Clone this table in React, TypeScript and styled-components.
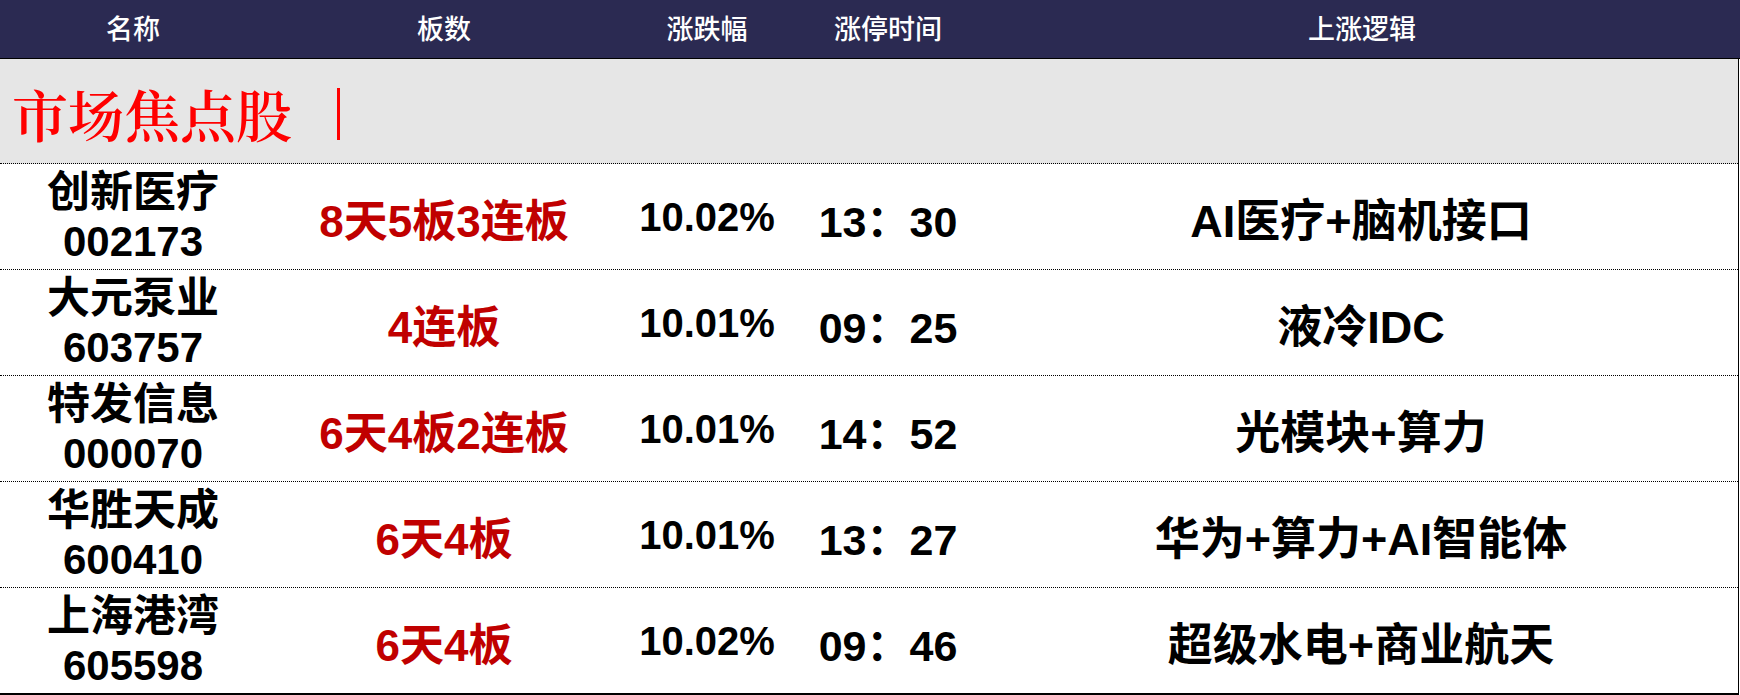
import styled, { createGlobalStyle } from 'styled-components';

const GlobalStyle = createGlobalStyle`
  html, body {
    margin: 0;
    padding: 0;
    background: #fff;
  }
  body {
    font-family: 'Liberation Sans', 'Noto Sans CJK SC', sans-serif;
  }
`;

const COLS = '266px 356px 170px 192px 1fr';

const stocks = [
  { name: '创新医疗', code: '002173', boards: '8天5板3连板', change: '10.02%', time: '13：30', logic: 'AI医疗+脑机接口' },
  { name: '大元泵业', code: '603757', boards: '4连板', change: '10.01%', time: '09：25', logic: '液冷IDC' },
  { name: '特发信息', code: '000070', boards: '6天4板2连板', change: '10.01%', time: '14：52', logic: '光模块+算力' },
  { name: '华胜天成', code: '600410', boards: '6天4板', change: '10.01%', time: '13：27', logic: '华为+算力+AI智能体' },
  { name: '上海港湾', code: '605598', boards: '6天4板', change: '10.02%', time: '09：46', logic: '超级水电+商业航天' },
];

const App = () => {
  return (
    <Wrapper>
      <GlobalStyle />
      <HeaderRow>
        <HeadCell>名称</HeadCell>
        <HeadCell>板数</HeadCell>
        <HeadCell>涨跌幅</HeadCell>
        <HeadCell>涨停时间</HeadCell>
        <HeadCell>上涨逻辑</HeadCell>
      </HeaderRow>

      <Body>
        <Band>
          <BandTitle>市场焦点股</BandTitle>
          <Caret />
        </Band>

        {stocks.map((s, i) => (
          <Row key={s.code} $last={i === stocks.length - 1}>
            <NameCell>
              <span>{s.name}</span>
              <span>{s.code}</span>
            </NameCell>
            <Cell $red $size={44}>{s.boards}</Cell>
            <Cell $size={40}>{s.change}</Cell>
            <Cell $size={43}>{s.time}</Cell>
            <Cell $size={45}>{s.logic}</Cell>
          </Row>
        ))}
      </Body>
    </Wrapper>
  );
};

const Wrapper = styled.div`
  width: 1740px;
  height: 695px;
  overflow: hidden;
  display: flex;
  flex-direction: column;
`;

const HeaderRow = styled.div`
  display: grid;
  grid-template-columns: ${COLS};
  height: 58px;
  background-color: #2b2a52;
  border-bottom: 1px solid #000;
`;

const HeadCell = styled.div`
  display: flex;
  align-items: center;
  justify-content: center;
  color: #fff;
  font-family: 'Noto Sans CJK SC', sans-serif;
  font-size: 27px;
  font-weight: 500;
  padding-bottom: 3px;
`;

const Body = styled.div`
  display: flex;
  flex-direction: column;
  border-right: 1px solid #000;
  margin-right: 1px;
`;

const Band = styled.div`
  display: flex;
  align-items: center;
  height: 104px;
  background-color: #e6e6e6;
  border-bottom: 1px dotted #000;
  padding-left: 12px;
`;

const BandTitle = styled.span`
  color: #ff0000;
  font-family: 'Noto Serif CJK SC', 'Noto Sans CJK SC', serif;
  font-size: 56px;
  font-weight: 600;
  line-height: 1;
  padding-top: 4px;
`;

const Caret = styled.span`
  display: block;
  width: 3px;
  height: 52px;
  margin-left: 45px;
  margin-top: 6px;
  background-color: #ff0000;
`;

const Row = styled.div<{ $last?: boolean }>`
  display: grid;
  grid-template-columns: ${COLS};
  height: 105px;
  background: #fff;
  border-bottom: ${p => (p.$last ? '2px solid #000' : '1px dotted #000')};
`;

const Cell = styled.div<{ $red?: boolean; $size: number }>`
  display: flex;
  align-items: center;
  justify-content: center;
  font-family: 'Liberation Sans', 'Noto Sans CJK SC', sans-serif;
  font-size: ${p => p.$size}px;
  font-weight: 700;
  color: ${p => (p.$red ? '#c00000' : '#000')};
  white-space: nowrap;
  padding-top: 2px;
`;

const NameCell = styled.div`
  display: flex;
  flex-direction: column;
  align-items: center;
  justify-content: center;
  font-family: 'Liberation Sans', 'Noto Sans CJK SC', sans-serif;
  font-size: 42px;
  font-weight: 700;
  line-height: 49px;
  color: #000;

  span:first-child {
    font-size: 43px;
  }
`;

export default App;
